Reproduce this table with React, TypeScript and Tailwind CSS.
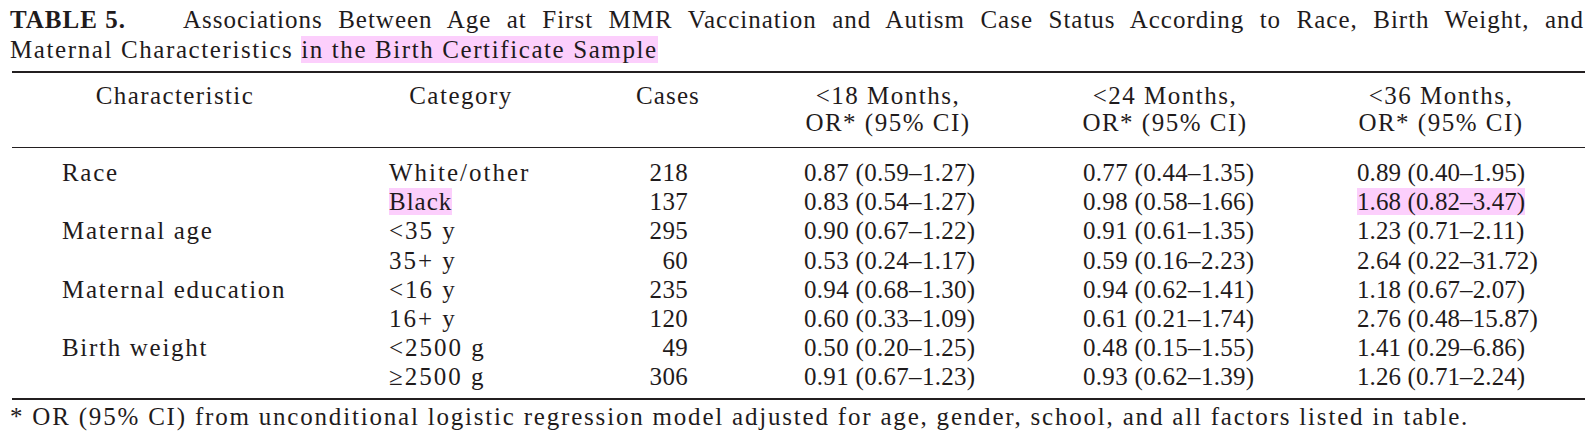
import * as React from "react";

type Row = {
  label: string;
  category: string;
  cases: string;
  or18: string;
  or24: string;
  or36: string;
  markCategory?: boolean;
  mark36?: boolean;
};

const rows: Row[] = [
  { label: "Race", category: "White/other", cases: "218", or18: "0.87 (0.59–1.27)", or24: "0.77 (0.44–1.35)", or36: "0.89 (0.40–1.95)" },
  { label: "", category: "Black", cases: "137", or18: "0.83 (0.54–1.27)", or24: "0.98 (0.58–1.66)", or36: "1.68 (0.82–3.47)", markCategory: true, mark36: true },
  { label: "Maternal age", category: "<35 y", cases: "295", or18: "0.90 (0.67–1.22)", or24: "0.91 (0.61–1.35)", or36: "1.23 (0.71–2.11)" },
  { label: "", category: "35+ y", cases: "60", or18: "0.53 (0.24–1.17)", or24: "0.59 (0.16–2.23)", or36: "2.64 (0.22–31.72)" },
  { label: "Maternal education", category: "<16 y", cases: "235", or18: "0.94 (0.68–1.30)", or24: "0.94 (0.62–1.41)", or36: "1.18 (0.67–2.07)" },
  { label: "", category: "16+ y", cases: "120", or18: "0.60 (0.33–1.09)", or24: "0.61 (0.21–1.74)", or36: "2.76 (0.48–15.87)" },
  { label: "Birth weight", category: "<2500 g", cases: "49", or18: "0.50 (0.20–1.25)", or24: "0.48 (0.15–1.55)", or36: "1.41 (0.29–6.86)" },
  { label: "", category: "≥2500 g", cases: "306", or18: "0.91 (0.67–1.23)", or24: "0.93 (0.62–1.39)", or36: "1.26 (0.71–2.24)" },
];

const cols = "grid grid-cols-[330px_242px_172px_268px_286px_266px]";

function Mark({ children }: { children: React.ReactNode }) {
  return <span className="bg-[#fccffc]">{children}</span>;
}

export default function App() {
  return (
    <div className="w-[1585px] h-[442px] bg-white text-[#1f1b1c] font-['Liberation_Serif',serif] text-[25px] pl-[10px] pt-[5px] overflow-hidden">
      {/* caption */}
      <div className="leading-[30px]">
        <div className="flex">
          <span className="font-bold tracking-[1px] mr-[57px] whitespace-nowrap">TABLE 5.</span>
          <div className="flex-1 text-justify [text-align-last:justify] tracking-[1px] pr-[1px]">
            Associations Between Age at First MMR Vaccination and Autism Case Status According to Race, Birth Weight, and
          </div>
        </div>
        <div className="tracking-[1.6px]">
          Maternal Characteristics <Mark>in the Birth Certificate Sample</Mark>
        </div>
      </div>

      <div className="mt-[6px] ml-[2px] border-t-2 border-[#231f20]" />

      {/* header */}
      <div className={`${cols} leading-[27px] pt-[9px] pb-[11px] text-center`}>
        <div className="tracking-[1.4px]">Characteristic</div>
        <div className="tracking-[1.5px]">Category</div>
        <div className="tracking-[1.1px]">Cases</div>
        <div className="tracking-[1.5px]">
          <div>&lt;18 Months,</div>
          <div>OR* (95% CI)</div>
        </div>
        <div className="tracking-[1.5px]">
          <div>&lt;24 Months,</div>
          <div>OR* (95% CI)</div>
        </div>
        <div className="tracking-[1.5px]">
          <div>&lt;36 Months,</div>
          <div>OR* (95% CI)</div>
        </div>
      </div>

      <div className="ml-[2px] border-t border-[#231f20]" />

      {/* body */}
      <div className="pt-[10px] pb-[6px]">
        {rows.map((r, i) => (
          <div key={i} className={`${cols} leading-[29.2px] h-[29.2px] whitespace-nowrap`}>
            <div className="pl-[52px] tracking-[1.7px]">{r.label}</div>
            <div className="pl-[49px] tracking-[2px]">
              {r.markCategory ? <Mark><span className="tracking-[1px]">{r.category}</span></Mark> : r.category}
            </div>
            <div className="text-right pr-[66px] tracking-[0.3px]">{r.cases}</div>
            <div className="pl-[50px] tracking-[0.3px]">{r.or18}</div>
            <div className="pl-[61px] tracking-[0.3px]">{r.or24}</div>
            <div className="pl-[49px] tracking-[0.1px]">
              {r.mark36 ? <Mark>{r.or36}</Mark> : r.or36}
            </div>
          </div>
        ))}
      </div>

      <div className="ml-[2px] border-t-2 border-[#231f20]" />

      {/* footnote */}
      <div className="mt-[3px] leading-[28px] tracking-[1.8px] whitespace-nowrap">
        * OR (95% CI) from unconditional logistic regression model adjusted for age, gender, school, and all factors listed in table.
      </div>
    </div>
  );
}
